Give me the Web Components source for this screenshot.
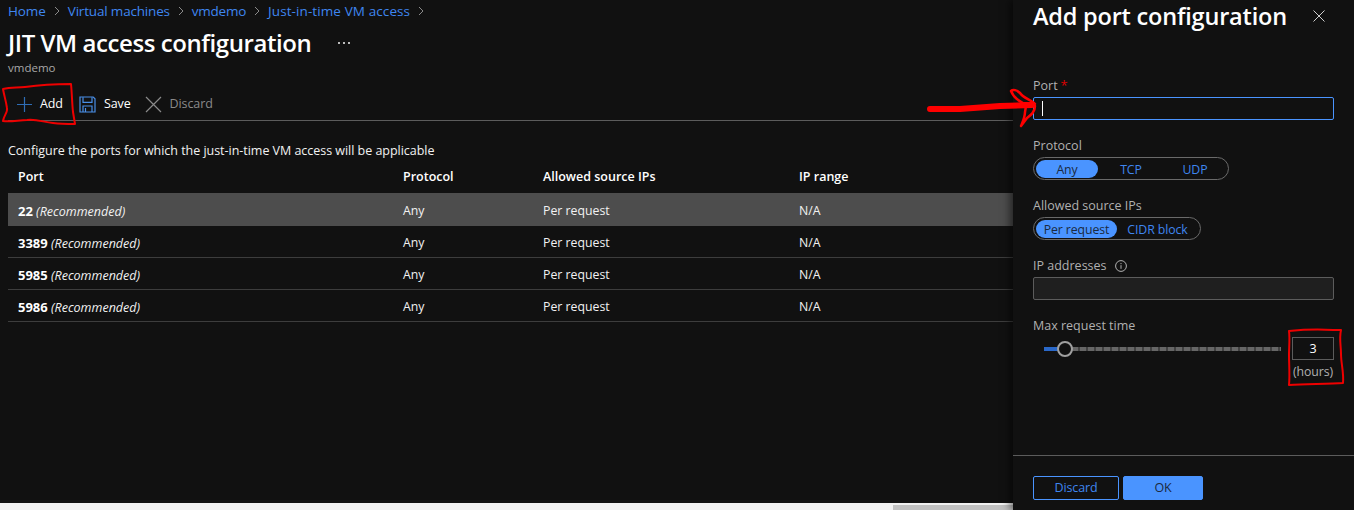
<!DOCTYPE html>
<html>
<head>
<meta charset="utf-8">
<title>JIT VM access configuration</title>
<style>
  html, body { margin: 0; height: 100%; background: #111; overflow: hidden; }
  body { font: 13px/18px "Open Sans", "Noto Sans", sans-serif; color: #fff; }
</style>
</head>
<body>
<jit-page></jit-page>

<script>
(function () {
  const BLUE = '#4a94ff';
  const LINK = '#3f86f0';

  function define(name, html, setup) {
    customElements.define(name, class extends HTMLElement {
      connectedCallback() {
        if (this.shadowRoot) return;
        const shadow = this.attachShadow({ mode: 'open' });
        shadow.innerHTML = html;
        if (setup) setup(this, shadow);
      }
    });
  }

  const CHEVRON = '<svg width="6" height="10" viewBox="0 0 6 10"><path d="M1 1l4 4-4 4" fill="none" stroke="#8a8a8a"/></svg>';

  define('az-breadcrumb', `
    <style>
      :host { display: flex; align-items: center; height: 22px; font-size: 13.5px; letter-spacing: .1px; }
      a { color: ${LINK}; text-decoration: none; }
      svg { margin: 0 8px; flex: none; }
      .home { letter-spacing: -.1px; }
      .vm { letter-spacing: -.18px; }
      .demo { letter-spacing: -.25px; }
    </style>
    <a class="home">Home</a>${CHEVRON}<a class="vm">Virtual machines</a>${CHEVRON}<a class="demo">vmdemo</a>${CHEVRON}<a>Just-in-time VM access</a>${CHEVRON}
  `);

  define('az-title', `
    <style>
      :host { display: block; }
      .row { display: flex; align-items: center; height: 36px; margin-top: 3px; }
      h1 { margin: 0; font-size: 24px; line-height: 36px; font-weight: 600; letter-spacing: -.43px; }
      .more { margin-left: 27px; display: flex; gap: 3px; }
      .more i { width: 2px; height: 2px; background: #bbb; display: block; }
      .sub { font-size: 11.5px; line-height: 16px; margin-top: -1px; color: #a8a8a8; }
    </style>
    <div class="row"><h1>JIT VM access configuration</h1><div class="more"><i></i><i></i><i></i></div></div>
    <div class="sub">vmdemo</div>
  `);

  define('az-toolbar', `
    <style>
      :host { display: flex; align-items: center; height: 32px; margin-top: 12px; border-bottom: 1px solid #5c5c5c; font-size: 12.5px; letter-spacing: -.1px; }
      .btn { display: flex; align-items: center; }
      .add { margin-left: 8px; }
      .add svg { margin-right: 7px; }
      .save { margin-left: 16px; }
      .save svg { margin-right: 8px; }
      .discard { margin-left: 14px; color: #8a8a8a; }
      .discard svg { margin-right: 8px; }
    </style>
    <div class="btn add"><svg width="17" height="17" viewBox="0 0 17 17"><path d="M8.5 1v15M1 8.5h15" stroke="#2f6db5" stroke-width="1.2" fill="none"/></svg>Add</div>
    <div class="btn save"><svg width="17" height="17" viewBox="0 0 17 17" fill="none" stroke="#4a8fe8" stroke-width="1.2"><path d="M1 1h13.2L16 2.8V16H1z"/><path d="M4 1.2v5.2h9V1.2"/><path d="M4 16v-6h9v6"/><path d="M6.5 12v4" /></svg>Save</div>
    <div class="btn discard"><svg width="17" height="17" viewBox="0 0 17 17"><path d="M1 1l15 15M16 1L1 16" stroke="#8a8a8a" stroke-width="1.2" fill="none"/></svg>Discard</div>
  `);

  define('port-row', `
    <style>
      :host { display: grid; grid-template-columns: 385px 140px 256px 1fr; height: 32px; align-items: center; box-sizing: border-box; border-bottom: 1px solid #3d3d3d; font-size: 12.3px; color: #f2f2f2; }
      :host([selected]) { background: #4d4d4d; border-bottom: 0; height: 33px; }
      :host([head]) { border-bottom: 0; height: 33px; font-size: 12.5px; font-weight: 600; color: #fff; }
      div { padding: 1px 0 0 10px; }
      :host(:not([head])) div { padding-top: 3px; }
      :host(:not([head])) div:first-child { padding-top: 0; margin-bottom: 4px; }
      ::slotted(b) { font-weight: 700; font-size: 13px; color: #fff; }
      ::slotted(em) { font-size: 12.5px; }
    </style>
    <div><slot name="port"></slot></div><div><slot name="proto"></slot></div><div><slot name="src"></slot></div><div><slot name="range"></slot></div>
  `);

  define('az-pills', `
    <style>
      :host { display: inline-flex; align-items: center; gap: var(--gap, 0); height: 23px; box-sizing: border-box; border: 1px solid #6a6a6a; border-radius: 12px; padding: 0 2px; font-size: 12.3px; letter-spacing: -.1px; color: ${LINK}; }
      ::slotted(span) { display: block; text-align: center; padding-top: 2px; line-height: 16px; border-radius: 9px; }
      ::slotted(.on) { background: ${BLUE}; color: #1b2a40; }
    </style>
    <slot></slot>
  `);

  define('az-field', `
    <style>
      :host { display: block; }
      label { display: flex; align-items: center; height: 18px; padding-top: 1px; margin-bottom: 2px; font-size: 12.5px; color: #b0b0b0; }
    </style>
    <label><slot name="label"></slot></label>
    <slot></slot>
  `);

  define('az-slider', `
    <style>
      :host { display: flex; align-items: flex-start; }
      .track { position: relative; width: 237px; height: 23px; margin: 0 11px 0 11px; }
      .rest { position: absolute; left: 28px; right: 0; top: 10px; height: 4px; background: repeating-linear-gradient(90deg, #666 0 6.4px, #414141 6.4px 8px); }
      .fill { position: absolute; left: 0; width: 14px; top: 10px; height: 4px; background: #2a68c8; }
      .thumb { position: absolute; left: 13px; top: 4px; width: 16px; height: 16px; box-sizing: border-box; border: 2px solid #a0a0a0; border-radius: 50%; background: #111; }
      .val { width: 42px; }
      .box { height: 23px; box-sizing: border-box; border: 1px solid #5c5c5c; text-align: center; line-height: 22px; font-size: 12.5px; color: #fff; }
      .unit { text-align: center; font-size: 12.3px; line-height: 18px; margin-top: 3px; color: #b0b0b0; letter-spacing: -.1px; white-space: nowrap; }
    </style>
    <div class="track"><div class="fill"></div><div class="rest"></div><div class="thumb"></div></div>
    <div class="val"><div class="box">3</div><div class="unit">(hours)</div></div>
  `);

  define('port-panel', `
    <style>
      :host { display: flex; flex-direction: column; width: 341px; flex: none; height: 510px; box-sizing: border-box; background: #111; box-shadow: -3px 0 8px rgba(0,0,0,.55); position: relative; z-index: 1; }
      header { display: flex; align-items: center; justify-content: space-between; height: 32px; padding: 0 29px 0 20px; }
      h2 { margin: 0; font-size: 23.5px; line-height: 32px; font-weight: 600; letter-spacing: -.2px; white-space: nowrap; }
      .form { flex: 1; padding: 44px 20px 0; display: flex; flex-direction: column; gap: 16px; }
      .star { color: #d00; margin-left: 3px; font-size: 13px; line-height: 1; }
      .input { height: 23px; box-sizing: border-box; border: 1px solid #5c5c5c; border-radius: 2px; }
      .input.active { border: 1px solid ${BLUE}; padding: 3px 0 3px 8px; }
      .input.active i { display: block; width: 1px; height: 15px; background: #fff; }
      .input.dim { background: #1f1f1f; }
      .info { margin-left: 8px; vertical-align: -2px; }
      .proto { --gap: 2px; }
      .proto span { width: 62px; }
      .per { width: 81px; }
      .cidr { width: 81px; }
      footer { height: 55px; box-sizing: border-box; border-top: 1px solid #5c5c5c; display: flex; gap: 4px; padding: 20px 20px 0; }
      button { all: unset; box-sizing: border-box; height: 24px; text-align: center; border-radius: 2px; font-size: 12.5px; line-height: 22px; letter-spacing: -.1px; border: 1px solid ${BLUE}; }
      .ghost { width: 86px; color: ${LINK}; }
      .solid { width: 80px; background: ${BLUE}; color: #1b2a40; }
    </style>
    <header>
      <h2>Add port configuration</h2>
      <svg width="12" height="12" viewBox="0 0 12 12"><path d="M.5.5l11 11M11.5.5l-11 11" stroke="#d0d0d0" fill="none"/></svg>
    </header>
    <div class="form">
      <az-field><span slot="label">Port<span class="star">*</span></span><div class="input active"><i></i></div></az-field>
      <az-field><span slot="label">Protocol</span><az-pills class="proto"><span class="on">Any</span><span>TCP</span><span>UDP</span></az-pills></az-field>
      <az-field><span slot="label">Allowed source IPs</span><az-pills><span class="per on">Per request</span><span class="cidr">CIDR block</span></az-pills></az-field>
      <az-field><span slot="label">IP addresses<svg class="info" width="12" height="12" viewBox="0 0 12 12"><circle cx="6" cy="6" r="5.4" fill="none" stroke="#b0b0b0"/><path d="M6 5.2v3.6M6 3v1.2" stroke="#b0b0b0" fill="none"/></svg></span><div class="input dim"></div></az-field>
      <az-field><span slot="label">Max request time</span><az-slider></az-slider></az-field>
    </div>
    <footer><button class="ghost">Discard</button><button class="solid">OK</button></footer>
  `);

  define('red-marks', `
    <style>
      :host { position: absolute; left: 0; top: 0; width: 1354px; height: 510px; pointer-events: none; z-index: 2; }
      svg { display: block; }
    </style>
    <svg width="1354" height="510" viewBox="0 0 1354 510" fill="none" stroke="#ee0000" stroke-linejoin="round" stroke-linecap="round">
      <path stroke-width="2" d="M3 89c8-2 14-1 22-2 14-2 30-3 46-3 1 10 1 19 2 28l2 12c-8 0-14 0-22-1-10-1-16-4-26-3-8 0-16 2-24 1 1-6 5-9 4-13-1-7-3-13-4-19z"/>
      <path stroke="#ff0000" stroke-width="6" d="M930 109l30 0 40-3 32-1"/>
      <path stroke="#ff0000" stroke-width="2.5" d="M1011 91c2 5 6 9 12 12l12 1c-3-4-12-6-15-11-3-3-7-4-9-2z"/>
      <path stroke="#ff0000" stroke-width="2.5" d="M1035 106c0 6-4 9-8 12l-6 8c2-5 4-9 4-14l1-6"/>
      <path stroke-width="2" d="M1289 331c10-1 28-2 44-1l8 0c-2 9 0 15 0 24 0 10 3 18 2 29-14 1-36 1-54 2 1-10 0-20 0-30 0-8 1-16 0-24z"/>
    </svg>
  `);

  define('jit-page', `
    <style>
      :host { display: flex; width: 1354px; height: 510px; position: relative; overflow: hidden; }
      main { flex: 1; min-width: 0; display: flex; flex-direction: column; box-sizing: border-box; }
      .content { flex: 1; padding: 0 0 0 8px; }
      .desc { font-size: 12.5px; letter-spacing: -.03px; line-height: 18px; margin-top: 21px; color: #f2f2f2; }
      .scroll { height: 7px; background: #f1f1f1; display: flex; justify-content: flex-end; }
      .scroll i { width: 120px; margin-top: 2px; background: #c1c1c1; display: block; }
    </style>
    <main>
      <div class="content">
        <az-breadcrumb></az-breadcrumb>
        <az-title></az-title>
        <az-toolbar></az-toolbar>
        <div class="desc">Configure the ports for which the just-in-time VM access will be applicable</div>
        <div id="rows"></div>
      </div>
      <div class="scroll"><i></i></div>
    </main>
    <port-panel></port-panel>
    <red-marks></red-marks>
  `, (host, shadow) => {
    const rows = shadow.getElementById('rows');
    const head = document.createElement('port-row');
    head.setAttribute('head', '');
    head.innerHTML = '<span slot="port">Port</span><span slot="proto">Protocol</span><span slot="src">Allowed source IPs</span><span slot="range">IP range</span>';
    rows.append(head);
    ['22', '3389', '5985', '5986'].forEach((port, i) => {
      const row = document.createElement('port-row');
      if (i === 0) row.setAttribute('selected', '');
      row.innerHTML = `<b slot="port">${port}</b><em slot="port"> (Recommended)</em><span slot="proto">Any</span><span slot="src">Per request</span><span slot="range">N/A</span>`;
      rows.append(row);
    });
  });
})();
</script>
</body>
</html>
